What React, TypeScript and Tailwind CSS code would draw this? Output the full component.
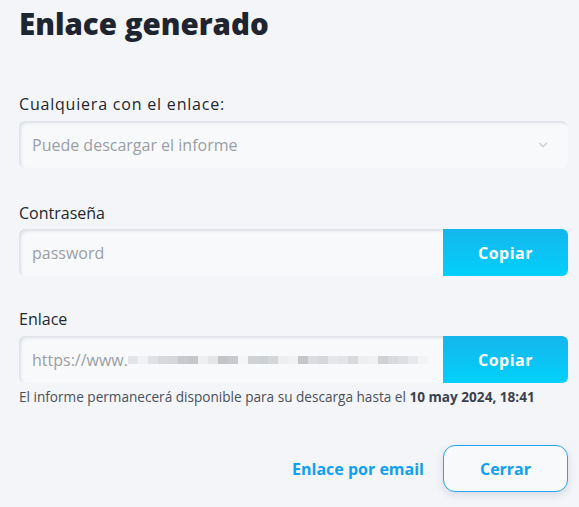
import { ChevronDown } from "lucide-react";

const font = { fontFamily: "'Open Sans', 'Noto Sans', sans-serif" };

const field =
  "h-[47px] rounded-md bg-[#f8f9fb] shadow-[inset_2px_2px_3px_rgba(120,135,150,0.22)] flex items-center px-[13px] text-[16px] text-[#9a9ea5]";

const label = "block h-[24px] text-[16px] leading-[24px]";

const copyBtn =
  "w-[125px] h-[47px] rounded-r-md bg-gradient-to-b from-[#14b6ec] to-[#00d0fb] text-white font-bold text-[16px] tracking-[0.03em] flex items-center justify-center";

// shades for the pixelated (hidden) part of the link
const blur = [
  "#e3e5e9", "#f1f2f4", "#dfe1e4", "#d7d9dd", "#d6d8dc", "#c8cace", "#c5c7cb", "#eef0f2",
  "#e4e6e8", "#c3c5c9", "#c8cace", "#f4f5f7", "#cfd1d5", "#cdd0d3", "#d3d5d9", "#eceef0",
  "#f1f2f4", "#c4c6ca", "#d9dbde", "#d6d8dc", "#e6e7ea", "#e2e4e7", "#d7d9dc", "#eceef0",
  "#f0f1f3", "#cfd1d5", "#d8dadd", "#dddfe2", "#e8e9ec", "#f3f4f6",
];

export default function App() {
  return (
    <div style={font} className="min-h-[507px] w-[579px] bg-[#f4f5f9] pl-[19px] pr-[11px] pt-[5px] text-[#23272e]">
      <h1 className="text-[29.5px] font-extrabold leading-[38px] text-[#1e2530]">Enlace generado</h1>

      <label className={`${label} mt-[49px] tracking-[0.05em]`}>Cualquiera con el enlace:</label>
      <div className={`${field} mt-[5px] h-[46px] justify-between`}>
        <span>Puede descargar el informe</span>
        <ChevronDown size={14} strokeWidth={2} className="mr-[5px] text-[#c8cbd0]" />
      </div>

      <label className={`${label} mt-[33px]`}>Contraseña</label>
      <div className="mt-[4px] flex">
        <div className={`${field} flex-1 rounded-r-none`}>password</div>
        <button className={copyBtn}>Copiar</button>
      </div>

      <label className={`${label} mt-[31px]`}>Enlace</label>
      <div className="mt-[5px] flex">
        <div className={`${field} flex-1 overflow-hidden rounded-r-none`}>
          <span>https://www.</span>
          <span className="flex h-[8px] items-center">
            {blur.map((c, i) => (
              <span key={i} className="h-[8px] w-[10px] shrink-0" style={{ background: c }} />
            ))}
          </span>
        </div>
        <button className={copyBtn}>Copiar</button>
      </div>

      <p className="mt-[6px] text-[13.6px] leading-[16px] text-[#4a505a]">
        El informe permanecerá disponible para su descarga hasta el{" "}
        <b className="font-bold text-[#3c424c]">10 may 2024, 18:41</b>
      </p>

      <div className="mt-[40px] flex items-center justify-end gap-[19px]">
        <button className="text-[16px] font-bold text-[#0fa0f0]">Enlace por email</button>
        <button className="h-[47px] w-[125px] rounded-xl border border-[#22a6ee] bg-[#f8f9fb] text-[16px] font-bold text-[#0fa0f0] shadow-[0_3px_8px_rgba(80,100,130,0.18)]">
          Cerrar
        </button>
      </div>
    </div>
  );
}
